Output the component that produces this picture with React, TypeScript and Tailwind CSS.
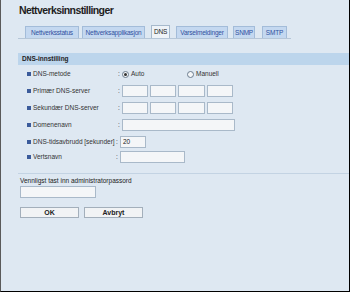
import React from "react";

const tabs = [
  { label: "Nettverksstatus", cls: "w-[54px]" },
  { label: "Nettverksapplikasjon", cls: "w-[63px] ml-[3px]" },
  { label: "DNS", cls: "w-[19px] ml-[6px]" },
  { label: "Varselmeldinger", cls: "w-[52px] ml-[6px]" },
  { label: "SNMP", cls: "w-[22px] ml-[5px]" },
  { label: "SMTP", cls: "w-[25px] ml-[7px]" },
];

function Bullet() {
  return <span className="w-[4px] h-[4px] bg-[#3b5b9b] shrink-0" />;
}

function Field({ className, value }: { className: string; value?: string }) {
  return (
    <div
      className={
        "h-[12px] bg-[#f4f6f8] border border-[#a9b9c9] text-[6.5px] leading-[10px] pl-[2px] text-[#222] " +
        className
      }
    >
      {value}
    </div>
  );
}

function Row({
  label,
  children,
  labelW = "w-[85px]",
  className = "",
}: {
  label: string;
  children: React.ReactNode;
  labelW?: string;
  className?: string;
}) {
  return (
    <div className={"flex items-center h-[12px] " + className}>
      <Bullet />
      <span className={"ml-[2px] text-[6.5px] text-[#333] whitespace-nowrap " + labelW}>{label}</span>
      <span className="text-[6.5px] text-[#333] w-[4px]">:</span>
      {children}
    </div>
  );
}

function Radio({ checked, label, className = "" }: { checked?: boolean; label: string; className?: string }) {
  return (
    <div className={"flex items-center gap-[2px] " + className}>
      <span className="w-[7px] h-[7px] rounded-full border border-[#6b7c8e] bg-[#f4f6f8] flex items-center justify-center">
        {checked && <span className="w-[3px] h-[3px] rounded-full bg-[#333]" />}
      </span>
      <span className="text-[6.5px] text-[#333]">{label}</span>
    </div>
  );
}

export default function App() {
  return (
    <div
      className="w-[350px] h-[292px] overflow-hidden bg-[#dee8f2] border-l border-l-[#5a5a5a] border-r border-r-black border-b border-b-black"
      style={{ fontFamily: '"Liberation Sans", Arial, sans-serif' }}
    >
      {/* Titel */}
      <div className="pt-[4px] pl-[18px] text-[10.5px] leading-[12px] tracking-[-0.6px] font-bold text-[#1e1e1e]">
        Nettverksinnstillinger
      </div>

      {/* Faner */}
      <div className="mt-[9px] ml-[17px] w-[273px] flex items-end pl-[7px] border-b border-[#b5c6d8]">
        {tabs.map((t) => (
          <div
            key={t.label}
            className={
              (t.label === "DNS"
                ? "h-[13px] text-[6.5px] leading-[12px] text-[#222] bg-[#eef3f8] border border-b-0 border-[#a6b9cc] "
                : "h-[12px] text-[6.5px] leading-[11px] text-[#3050a0] bg-[#c4d8f0] border border-b-0 border-[#a3bcd9] ") +
              "text-center whitespace-nowrap tracking-[-0.2px] " +
              t.cls
            }
          >
            {t.label}
          </div>
        ))}
      </div>

      {/* DNS-innstilling */}
      <div className="mt-[14px] ml-[17px] h-[12px] bg-[#bcd5ec] pl-[4px] text-[6.5px] leading-[12px] font-bold text-[#222]">
        DNS-innstilling
      </div>

      <div className="ml-[26px] mt-[3px] flex flex-col gap-[5px]">
        <Row label="DNS-metode">
          <div className="flex items-center">
            <Radio checked label="Auto" className="w-[65px]" />
            <Radio label="Manuell" />
          </div>
        </Row>
        <Row label="Primær DNS-server">
          <div className="flex gap-[2px]">
            <Field className="w-[26px]" />
            <Field className="w-[26px]" />
            <Field className="w-[27px]" />
            <Field className="w-[26px]" />
          </div>
        </Row>
        <Row label="Sekundær DNS-server">
          <div className="flex gap-[2px]">
            <Field className="w-[26px]" />
            <Field className="w-[26px]" />
            <Field className="w-[27px]" />
            <Field className="w-[26px]" />
          </div>
        </Row>
        <Row label="Domenenavn">
          <Field className="w-[113px]" />
        </Row>
        <Row label="DNS-tidsavbrudd [sekunder]" labelW="w-[83px]">
          <Field className="w-[26px]" value="20" />
        </Row>
        <Row label="Vertsnavn" labelW="w-[83px]" className="-mt-[2px]">
          <Field className="w-[65px]" />
        </Row>
      </div>

      <div className="mt-[10px] ml-[17px] border-t border-[#c3d3e3]" />

      <div className="ml-[19px] mt-[2px] text-[6.5px] leading-[9px] text-[#222]">
        Vennligst tast inn administratorpassord
      </div>
      <Field className="ml-[19px] mt-[1px] w-[76px]" />

      <div className="ml-[19px] mt-[9px] flex gap-[5px]">
        <button className="w-[59px] h-[11px] text-[7px] leading-[9px] font-bold text-[#222] bg-[#f1f3f5] border border-[#a3afbb]">
          OK
        </button>
        <button className="w-[59px] h-[11px] text-[7px] leading-[9px] font-bold text-[#222] bg-[#f1f3f5] border border-[#a3afbb]">
          Avbryt
        </button>
      </div>
    </div>
  );
}
